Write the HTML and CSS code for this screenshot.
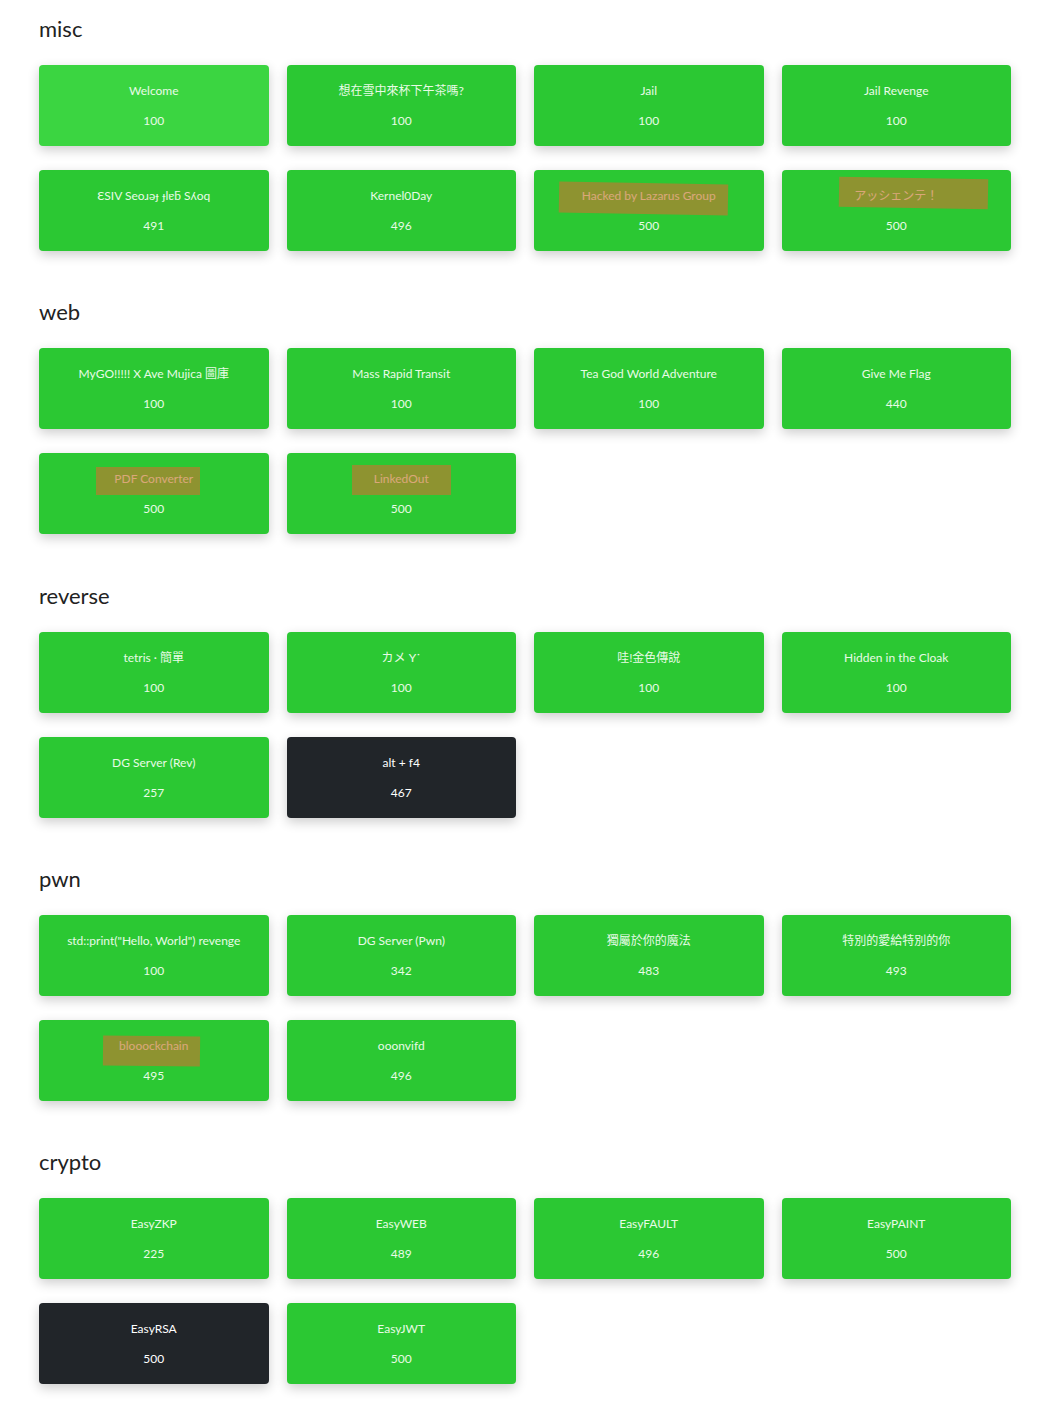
FILE: index.html
```html
<!DOCTYPE html>
<html lang="en">
<head>
    <meta charset="UTF-8">
    <meta name="viewport" content="width=device-width, initial-scale=1.0">
    <title>Challenges</title>
    <link rel="stylesheet" href="styles.css">
</head>
<body>
<div class="board">

    <section class="category">
        <h3 class="category-title">misc</h3>
        <div class="grid">
            <div class="chal chal-hover"><p class="chal-name">Welcome</p><p class="chal-value">100</p></div>
            <div class="chal"><p class="chal-name">想在雪中來杯下午茶嗎?</p><p class="chal-value">100</p></div>
            <div class="chal"><p class="chal-name">Jail</p><p class="chal-value">100</p></div>
            <div class="chal"><p class="chal-name">Jail Revenge</p><p class="chal-value">100</p></div>
            <div class="chal"><p class="chal-name">ƐSIV Seoɹəɟ ɟlɐƃ Sʎoq</p><p class="chal-value">491</p></div>
            <div class="chal"><p class="chal-name">Kernel0Day</p><p class="chal-value">496</p></div>
            <div class="chal"><p class="chal-name">Hacked by Lazarus Group</p><p class="chal-value">500</p><span class="scribble s-lazarus"></span></div>
            <div class="chal"><p class="chal-name">アッシェンテ！</p><p class="chal-value">500</p><span class="scribble s-aschente"></span></div>
        </div>
    </section>

    <section class="category">
        <h3 class="category-title">web</h3>
        <div class="grid">
            <div class="chal"><p class="chal-name">MyGO!!!!! X Ave Mujica 圖庫</p><p class="chal-value">100</p></div>
            <div class="chal"><p class="chal-name">Mass Rapid Transit</p><p class="chal-value">100</p></div>
            <div class="chal"><p class="chal-name">Tea God World Adventure</p><p class="chal-value">100</p></div>
            <div class="chal"><p class="chal-name">Give Me Flag</p><p class="chal-value">440</p></div>
            <div class="chal"><p class="chal-name">PDF Converter</p><p class="chal-value">500</p><span class="scribble s-pdf"></span></div>
            <div class="chal"><p class="chal-name">LinkedOut</p><p class="chal-value">500</p><span class="scribble s-linked"></span></div>
        </div>
    </section>

    <section class="category">
        <h3 class="category-title">reverse</h3>
        <div class="grid">
            <div class="chal"><p class="chal-name">tetris · 簡單</p><p class="chal-value">100</p></div>
            <div class="chal"><p class="chal-name">カメ Y˙</p><p class="chal-value">100</p></div>
            <div class="chal"><p class="chal-name">哇!金色傳說</p><p class="chal-value">100</p></div>
            <div class="chal"><p class="chal-name">Hidden in the Cloak</p><p class="chal-value">100</p></div>
            <div class="chal"><p class="chal-name">DG Server (Rev)</p><p class="chal-value">257</p></div>
            <div class="chal chal-dark"><p class="chal-name">alt + f4</p><p class="chal-value">467</p></div>
        </div>
    </section>

    <section class="category">
        <h3 class="category-title">pwn</h3>
        <div class="grid">
            <div class="chal"><p class="chal-name">std::print("Hello, World") revenge</p><p class="chal-value">100</p></div>
            <div class="chal"><p class="chal-name">DG Server (Pwn)</p><p class="chal-value">342</p></div>
            <div class="chal"><p class="chal-name">獨屬於你的魔法</p><p class="chal-value">483</p></div>
            <div class="chal"><p class="chal-name">特別的愛給特別的你</p><p class="chal-value">493</p></div>
            <div class="chal"><p class="chal-name">blooockchain</p><p class="chal-value">495</p><span class="scribble s-block"></span></div>
            <div class="chal"><p class="chal-name">ooonvifd</p><p class="chal-value">496</p></div>
        </div>
    </section>

    <section class="category">
        <h3 class="category-title">crypto</h3>
        <div class="grid">
            <div class="chal"><p class="chal-name">EasyZKP</p><p class="chal-value">225</p></div>
            <div class="chal"><p class="chal-name">EasyWEB</p><p class="chal-value">489</p></div>
            <div class="chal"><p class="chal-name">EasyFAULT</p><p class="chal-value">496</p></div>
            <div class="chal"><p class="chal-name">EasyPAINT</p><p class="chal-value">500</p></div>
            <div class="chal chal-dark"><p class="chal-name">EasyRSA</p><p class="chal-value">500</p></div>
            <div class="chal"><p class="chal-name">EasyJWT</p><p class="chal-value">500</p></div>
        </div>
    </section>

</div>
</body>
</html>
```

FILE: styles.css
```css
body{
    margin:0;
    background:#fff;
    font-family: Lato, "Noto Sans CJK TC", "Noto Sans", sans-serif;
    color:#212529;
}

.board{
    width:972px;
    padding:16px 0 0 39px;
}

.category{
    margin-bottom:48.3px;
}

.category-title{
    margin:0 0 23px;
    font-size:22px;
    line-height:26px;
    font-weight:normal;
    color:#222;
}

.grid{
    display:grid;
    grid-template-columns: repeat(4, 1fr);
    column-gap:18px;
    row-gap:24px;
}

/* challenge button */
.chal{
    position:relative;
    height:81px;
    box-sizing:border-box;
    padding-top:17px;
    background:#2bc833;
    border-radius:4px;
    box-shadow:0 4px 12px rgba(0,0,0,.2);
    color:#e8fbe6;
    text-align:center;
    font-size:12px;
    line-height:18px;
}

.chal-hover{
    background:#3bd541;
}

.chal-dark{
    background:#212529;
    color:#fff;
}

.chal p{
    margin:0;
}

.chal-value{
    margin-top:12px !important;
}

/* marker strokes drawn over some names */
.scribble{
    position:absolute;
    background:rgba(208,112,46,.6);
}

.s-lazarus{
    left:25px; top:13px; width:169px; height:31px;
    transform:rotate(1deg);
}
.s-aschente{
    left:57px; top:8px; width:149px; height:30px;
    transform:rotate(1deg);
}
.s-pdf{
    left:57px; top:14px; width:104px; height:28px;
}
.s-linked{
    left:65px; top:12px; width:99px; height:30px;
}
.s-block{
    left:64px; top:16px; width:97px; height:30px;
    transform:rotate(.6deg);
}
```
